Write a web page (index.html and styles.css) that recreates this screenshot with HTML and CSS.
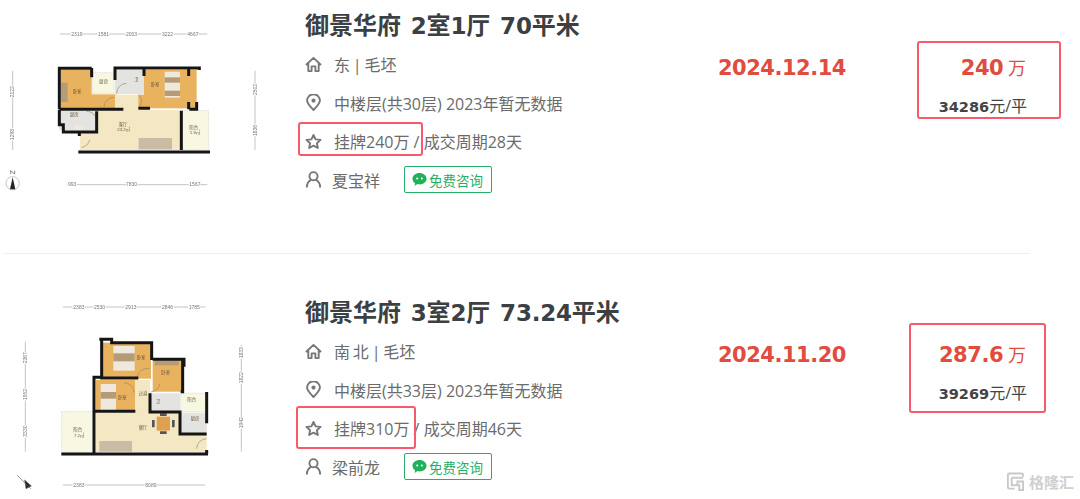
FILE: index.html
```html
<!DOCTYPE html>
<html lang="zh-CN">
<head>
    <meta charset="UTF-8">
    <meta name="viewport" content="width=device-width, initial-scale=1.0">
    <title>成交记录</title>
    <link rel="stylesheet" href="styles.css">
</head>
<body>
    <svg class="defs" aria-hidden="true">
        <defs>
            <filter id="soft"><feGaussianBlur stdDeviation="1.6"></feGaussianBlur></filter>
            <symbol id="i-home" viewBox="0 0 18 18">
                <path d="M1 9.500 9 2l8 7.500M3.500 7.500V16H7v-5h4v5h3.500V7.500" fill="none" stroke="currentColor" stroke-width="2" stroke-linejoin="round"></path>
            </symbol>
            <symbol id="i-pin" viewBox="0 0 18 18">
                <path d="M9 17C5.500 12.800 2.200 10.300 2.200 7a6.800 6.800 0 0 1 13.600 0c0 3.300-3.300 5.800-6.800 10z" fill="none" stroke="currentColor" stroke-width="2"></path>
                <circle cx="9" cy="7" r="2.200" fill="currentColor"></circle>
            </symbol>
            <symbol id="i-star" viewBox="0 0 18 18">
                <path d="m9 2 2.200 4.700 5.300.6-3.900 3.500 1 5.100L9 13.400l-4.600 2.500 1-5.100L1.500 7.300l5.300-.6z" fill="none" stroke="currentColor" stroke-width="2" stroke-linejoin="round"></path>
            </symbol>
            <symbol id="i-user" viewBox="0 0 18 18">
                <circle cx="9" cy="5.500" r="4.300" fill="none" stroke="currentColor" stroke-width="2"></circle>
                <path d="M2 17.500c0-4.500 2.300-7 4.700-8M16 17.500c0-4.500-2.300-7-4.700-8" fill="none" stroke="currentColor" stroke-width="2"></path>
            </symbol>
            <symbol id="i-chat" viewBox="0 0 16 16">
                <path d="M8 1c4.100 0 7.500 2.700 7.500 6.100S12.100 13.200 8 13.200c-.8 0-1.500-.1-2.200-.3L2.800 15l.5-3C1.500 10.900.5 9.100.5 7.100.5 3.700 3.900 1 8 1z" fill="currentColor"></path>
                <circle cx="5.500" cy="7" r="1.100" fill="#fff"></circle>
                <circle cx="10.500" cy="7" r="1.100" fill="#fff"></circle>
            </symbol>
        </defs>
    </svg>

    <div class="list">
        <div class="row">
            <div class="plan">
                <svg viewBox="0 0 861 750">
                    <g filter="url(#soft)">
                        <g class="dim">
                            <path d="M180 102H622M200 554H622M38 212V450M765 212V450"></path>
                            <text x="214" y="107">2319</text><text x="294" y="107">1581</text><text x="378" y="107">2003</text><text x="486" y="107">3222</text><text x="562" y="107">4667</text>
                            <text x="204" y="559">993</text><text x="378" y="559">7830</text><text x="568" y="559">1567</text>
                            <text transform="translate(43 292) rotate(-90)">2122</text>
                            <text transform="translate(43 420) rotate(-90)">1298</text>
                            <text transform="translate(770 285) rotate(-90)">2502</text>
                            <text transform="translate(770 408) rotate(-90)">1836</text>
                        </g>
                        <rect class="wood" x="183" y="210" width="92" height="115"></rect>
                        <rect class="wood" x="270" y="283" width="80" height="42"></rect>
                        <rect class="pale" x="278" y="218" width="64" height="62"></rect>
                        <rect class="tile" x="345" y="210" width="87" height="72"></rect>
                        <rect class="wood" x="432" y="210" width="158" height="115"></rect>
                        <rect class="wood" x="412" y="284" width="24" height="41"></rect>
                        <rect class="tile" x="178" y="333" width="112" height="58"></rect>
                        <rect class="cream" x="345" y="284" width="70" height="50"></rect>
                        <rect class="cream" x="290" y="330" width="250" height="120"></rect>
                        <rect class="cream" x="240" y="392" width="60" height="58"></rect>
                        <rect class="pale" x="546" y="332" width="80" height="118"></rect>
                        <rect class="fit" x="183" y="248" width="20" height="58"></rect>
                        <rect class="sheet" x="494" y="215" width="46" height="78"></rect>
                        <rect class="fit" x="494" y="232" width="46" height="16"></rect>
                        <rect class="fit" x="494" y="272" width="46" height="16"></rect>
                        <rect class="sofa" x="416" y="414" width="100" height="34"></rect>
                        <rect class="sheet" x="222" y="376" width="30" height="12"></rect>
                        <path class="swing" d="M312 322a30 30 0 0 1 30-30M418 322a30 30 0 0 0 0-36M245 442a30 30 0 0 0 24-22M290 360a30 30 0 0 0-30-26M350 280a30 30 0 0 1 30-30"></path>
                        <path class="wall" d="M178 328V205H275M345 210V204H598V210M432 204V228M275 204V232M345 204V240M566 204V228M566 306V328M590 306V328H568M178 328H240M180 328H370M415 325H450M178 330V374H190V396H238V408M290 334V396H205M235 456H630M544 332V450"></path>
                        <g class="label">
                            <text x="218" y="278">卧室</text><text x="298" y="250">厨房</text><text x="403" y="244">卫</text><text x="452" y="258">卧室</text><text x="210" y="348">厨房</text><text x="356" y="378">客厅</text><text x="352" y="394">23.2㎡</text><text x="568" y="388">阳台</text><text x="570" y="402">5.9㎡</text>
                        </g>
                        <circle cx="38" cy="550" r="20" fill="none" stroke="#aaa" stroke-width="2"></circle>
                        <path d="M38 532 46 568H30z" fill="#222"></path>
                        <path class="needle" d="M32 522V512L44 522V512"></path>
                    </g>
                </svg>
            </div>
            <div class="info">
                <h2 class="name">御景华府 <span class="num">2</span>室<span class="num">1</span>厅 <span class="num">70</span>平米</h2>
                <div class="line tags"><svg class="icon"><use href="#i-home"></use></svg>东 | 毛坯</div>
                <div class="line"><svg class="icon"><use href="#i-pin"></use></svg>中楼层(共30层) 2023年暂无数据</div>
                <div class="line"><svg class="icon"><use href="#i-star"></use></svg>挂牌240万 / 成交周期28天</div>
                <div class="line agent"><svg class="icon"><use href="#i-user"></use></svg>夏宝祥<a class="consult"><svg class="chat"><use href="#i-chat"></use></svg>免费咨询</a></div>
            </div>
            <div class="date">2024.12.14</div>
            <div class="price">
                <div class="total"><b>240</b> 万</div>
                <div class="unit"><b>34286</b>元/平</div>
            </div>
            <div class="mark mark-list-a"></div>
            <div class="mark mark-price-a"></div>
        </div>

        <div class="row">
            <div class="plan">
                <svg viewBox="0 111 861 750">
                    <g filter="url(#soft)">
                        <g class="dim">
                            <path d="M188 171H616M188 705H616M76 275V605M724 285V605"></path>
                            <text x="220" y="176">2383</text><text x="282" y="176">2530</text><text x="376" y="176">2913</text><text x="486" y="176">2846</text><text x="566" y="176">1785</text>
                            <text x="220" y="710">2383</text><text x="436" y="710">8089</text>
                            <text transform="translate(81 340) rotate(-90)">2367</text>
                            <text transform="translate(81 450) rotate(-90)">1952</text>
                            <text transform="translate(81 560) rotate(-90)">3330</text>
                            <text transform="translate(729 325) rotate(-90)">1833</text>
                            <text transform="translate(729 400) rotate(-90)">1822</text>
                            <text transform="translate(729 535) rotate(-90)">1942</text>
                        </g>
                        <rect class="wood" x="305" y="278" width="148" height="108"></rect>
                        <rect class="wood" x="458" y="328" width="90" height="97"></rect>
                        <rect class="wood" x="288" y="390" width="118" height="96"></rect>
                        <rect class="cream" x="405" y="390" width="45" height="100"></rect>
                        <rect class="cream" x="288" y="488" width="332" height="118"></rect>
                        <rect class="tile" x="450" y="430" width="90" height="55"></rect>
                        <rect class="pale" x="542" y="430" width="78" height="55"></rect>
                        <rect class="tile" x="540" y="490" width="80" height="58"></rect>
                        <rect class="pale" x="185" y="485" width="97" height="122"></rect>
                        <rect class="sheet" x="340" y="288" width="64" height="74"></rect>
                        <rect class="fit" x="340" y="310" width="64" height="24"></rect>
                        <rect class="sheet" x="302" y="402" width="46" height="78"></rect>
                        <rect class="fit" x="302" y="426" width="46" height="20"></rect>
                        <rect class="fit" x="464" y="324" width="72" height="22"></rect>
                        <rect class="sofa" x="298" y="573" width="98" height="32"></rect>
                        <rect x="470" y="500" width="40" height="42" fill="#e0a050"></rect>
                        <path class="chairs" d="M460 510V532M520 510V532M480 494H500M480 548H500"></path>
                        <path class="swing" d="M412 386a30 30 0 0 1 36-30M372 398a30 30 0 0 1 30 30M452 426a30 30 0 0 0 28-26M590 596a30 30 0 0 1 30-30"></path>
                        <path class="wall" d="M298 268H335V278H455V330M305 270V384H415M282 486V382H305M282 380V610M184 612H624M458 328H552V350M548 328V425H542M450 430V486H540V552H620M620 426V520M620 600V612M406 484H284"></path>
                        <g class="label">
                            <text x="410" y="326">卧室</text><text x="484" y="372">卧室</text><text x="354" y="446">卧室</text><text x="416" y="436">过道</text><text x="468" y="458">卫</text><text x="562" y="454">阳台</text><text x="572" y="510">厨房</text><text x="416" y="536">餐厅</text><text x="220" y="544">阳台</text><text x="222" y="560">7.2㎡</text>
                        </g>
                        <path d="M52 676 92 716M74 690 94 708 78 716z" fill="#222" stroke="#666" stroke-width="2"></path>
                    </g>
                </svg>
            </div>
            <div class="info">
                <h2 class="name">御景华府 <span class="num">3</span>室<span class="num">2</span>厅 <span class="num">73.24</span>平米</h2>
                <div class="line tags"><svg class="icon"><use href="#i-home"></use></svg>南 北 | 毛坯</div>
                <div class="line"><svg class="icon"><use href="#i-pin"></use></svg>中楼层(共33层) 2023年暂无数据</div>
                <div class="line"><svg class="icon"><use href="#i-star"></use></svg>挂牌310万 / 成交周期46天</div>
                <div class="line agent"><svg class="icon"><use href="#i-user"></use></svg>梁前龙<a class="consult"><svg class="chat"><use href="#i-chat"></use></svg>免费咨询</a></div>
            </div>
            <div class="date">2024.11.20</div>
            <div class="price">
                <div class="total"><b>287.6</b> 万</div>
                <div class="unit"><b>39269</b>元/平</div>
            </div>
            <div class="mark mark-list-b"></div>
            <div class="mark mark-price-b"></div>
        </div>
    </div>

    <div class="watermark">
        <svg class="wm-logo" viewBox="0 0 20 20">
            <path d="M18 5V3a1.500 1.500 0 0 0-1.500-1.500h-13A1.500 1.500 0 0 0 2 3v13a1.500 1.500 0 0 0 1.500 1.500H9M6 6h12M6 6v8h5M12 10h6v9h-4v-5h-2z" fill="none" stroke="#c9c9c9" stroke-width="2"></path>
        </svg>
        <span>格隆汇</span>
    </div>
</body>
</html>
```

FILE: styles.css
```css
:root {
    --red: #e14c3e;
    --mark: #f65a6c;
    --green: #27ae68;
    --text: #6b6b6b;
    --dark: #3c4043;
}

* {
    box-sizing: border-box;
    margin: 0;
    padding: 0;
}

html, body {
    height: 499px;
    overflow: hidden;
}

body {
    position: relative;
    background: #fff;
    font-family: "Open Sans", "Noto Sans CJK SC", sans-serif;
    color: var(--text);
}

.defs {
    display: none;
}

.list {
    height: 531px;
    margin-top: -32px;
    padding-left: 3px;
    overflow: hidden;
}

.row {
    position: relative;
    display: grid;
    grid-template-columns: 287px 428px 1fr auto;
    width: 1027px;
    height: 286px;
    margin-bottom: 1px;
    padding: 32px 3px 0 0;
    border-bottom: 1px solid #f0f0f0;
}

.plan svg {
    display: block;
    width: 287px;
    height: 250px;
    margin-left: -3px;
}

.plan text {
    font-family: "Liberation Sans", "Noto Sans CJK SC", sans-serif;
}

.dim path {
    fill: none;
    stroke: #a8a8a8;
    stroke-width: 2;
}

.dim text {
    font-size: 15px;
    fill: #777;
    paint-order: stroke;
    stroke: #fff;
    stroke-width: 5px;
}

.label text {
    font-size: 13px;
    fill: #6d5a3a;
}

.wood { fill: #e8b25f; }
.cream { fill: #f4e8c4; }
.pale { fill: #f8f8e2; stroke: #ccc; stroke-width: 2; stroke-dasharray: 4 3; }
.tile { fill: #e3e3e1; }
.fit { fill: #b59c78; }
.sheet { fill: #efe8dc; }
.sofa { fill: #c9bba4; }

.swing {
    fill: none;
    stroke: #9a8a6a;
    stroke-width: 2;
}

.chairs {
    fill: none;
    stroke: #555;
    stroke-width: 8;
}

.needle {
    fill: none;
    stroke: #555;
    stroke-width: 2;
}

.wall {
    fill: none;
    stroke: #151515;
    stroke-width: 9;
}

.info {
    padding: 8px 0 0 15px;
}

.name {
    height: 34px;
    margin-bottom: 3px;
    font-size: 24px;
    line-height: 34px;
    font-weight: 700;
    word-spacing: 3.500px;
    color: var(--dark);
    white-space: nowrap;
}

.num {
    font-family: "DejaVu Sans", sans-serif;
    font-size: 23px;
    letter-spacing: -0.200px;
}

.line {
    display: flex;
    align-items: center;
    height: 38.500px;
    font-size: 16px;
    white-space: nowrap;
}

.tags {
    word-spacing: -1.300px;
}

.icon {
    flex: none;
    width: 17px;
    height: 17px;
    margin-right: 12px;
    color: #777;
}

.agent .icon {
    margin-right: 10px;
}

.consult {
    display: inline-flex;
    align-items: center;
    height: 27px;
    margin-left: 24px;
    padding: 0 8px 0 7px;
    border: 1px solid var(--green);
    border-radius: 2px;
    font-size: 13.500px;
    color: var(--green);
}

.chat {
    width: 15px;
    height: 15px;
    margin-right: 2px;
    color: #1fb25a;
}

.date {
    margin-top: 53px;
    font-family: "DejaVu Sans", sans-serif;
    font-size: 21px;
    line-height: 30px;
    font-weight: 700;
    letter-spacing: -0.500px;
    color: var(--red);
}

.price {
    margin-top: 53px;
    text-align: right;
}

.total {
    padding-right: 1px;
    font-size: 18px;
    line-height: 30px;
    color: var(--red);
}

.total b {
    font-family: "DejaVu Sans", sans-serif;
    font-size: 21px;
    letter-spacing: -0.400px;
}

.unit {
    margin-top: 8px;
    font-size: 16px;
    line-height: 30px;
    color: #444;
}

.unit b {
    font-family: "DejaVu Sans", sans-serif;
    font-size: 14.500px;
}

.mark {
    position: absolute;
    border: 2px solid var(--mark);
    border-radius: 3px;
}

.mark-list-a { left: 295px; top: 154px; width: 125px; height: 34px; }
.mark-price-a { left: 914px; top: 73px; width: 144px; height: 78px; }
.mark-list-b { left: 293px; top: 151px; width: 120px; height: 43px; }
.mark-price-b { left: 906px; top: 68px; width: 137px; height: 90px; }

.watermark {
    position: absolute;
    right: 6px;
    bottom: 7px;
    display: flex;
    align-items: center;
    gap: 4px;
    font-size: 15px;
    font-weight: 700;
    color: #d0d0d0;
}

.wm-logo {
    width: 19px;
    height: 19px;
}
```
